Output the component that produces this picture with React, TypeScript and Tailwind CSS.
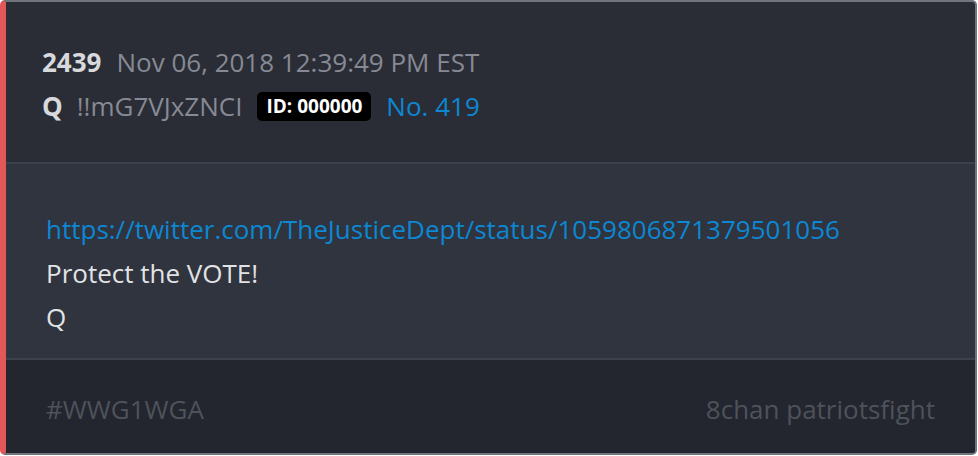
import * as React from "react"

const App = () => {
  return (
    <div className="w-[978px] h-[456px] bg-white font-['Open_Sans',sans-serif]">
      <div className="w-[977px] h-[455px] flex flex-col overflow-hidden rounded-[5px] border-y-2 border-r-2 border-l-[6px] border-y-[#70747c] border-r-[#70747c] border-l-[#e25858] bg-[#2a2d36]">
        <div className="h-[162px] shrink-0 pl-[36px] pt-[45px] flex flex-col gap-[14px] border-b-2 border-[#3d414a]">
          <div className="flex items-baseline gap-[15px] text-[26px] leading-[30px]">
            <span className="font-bold text-[#d8d9dc]">2439</span>
            <span className="text-[#868a94]">Nov 06, 2018 12:39:49 PM EST</span>
          </div>
          <div className="flex items-center text-[26px] leading-[30px]">
            <span className="font-bold text-[#d8d9dc]">Q</span>
            <span className="ml-[14px] text-[#868a94]">!!mG7VJxZNCI</span>
            <span className="ml-[15px] bg-black text-white font-bold text-[19px] leading-[29px] px-[9px] rounded-[5px]">
              ID: 000000
            </span>
            <span className="ml-[15px] text-[#0d87d2]">No. 419</span>
          </div>
        </div>
        <div className="h-[196px] shrink-0 bg-[#2f343e] pl-[40px] pt-[50px] flex flex-col gap-[14px] text-[26px] leading-[30px] border-b-2 border-[#3d414a]">
          <a className="text-[#0d87d2]">https://twitter.com/TheJusticeDept/status/1059806871379501056</a>
          <span className="text-[#e2e3e5]">Protect the VOTE!</span>
          <span className="text-[#e2e3e5]">Q</span>
        </div>
        <div className="flex-1 bg-[#23262e] pl-[40px] pr-[40px] pt-[5px] flex items-center justify-between text-[26px] text-[#4e525b]">
          <span>#WWG1WGA</span>
          <span>8chan patriotsfight</span>
        </div>
      </div>
    </div>
  )
}

export default App
